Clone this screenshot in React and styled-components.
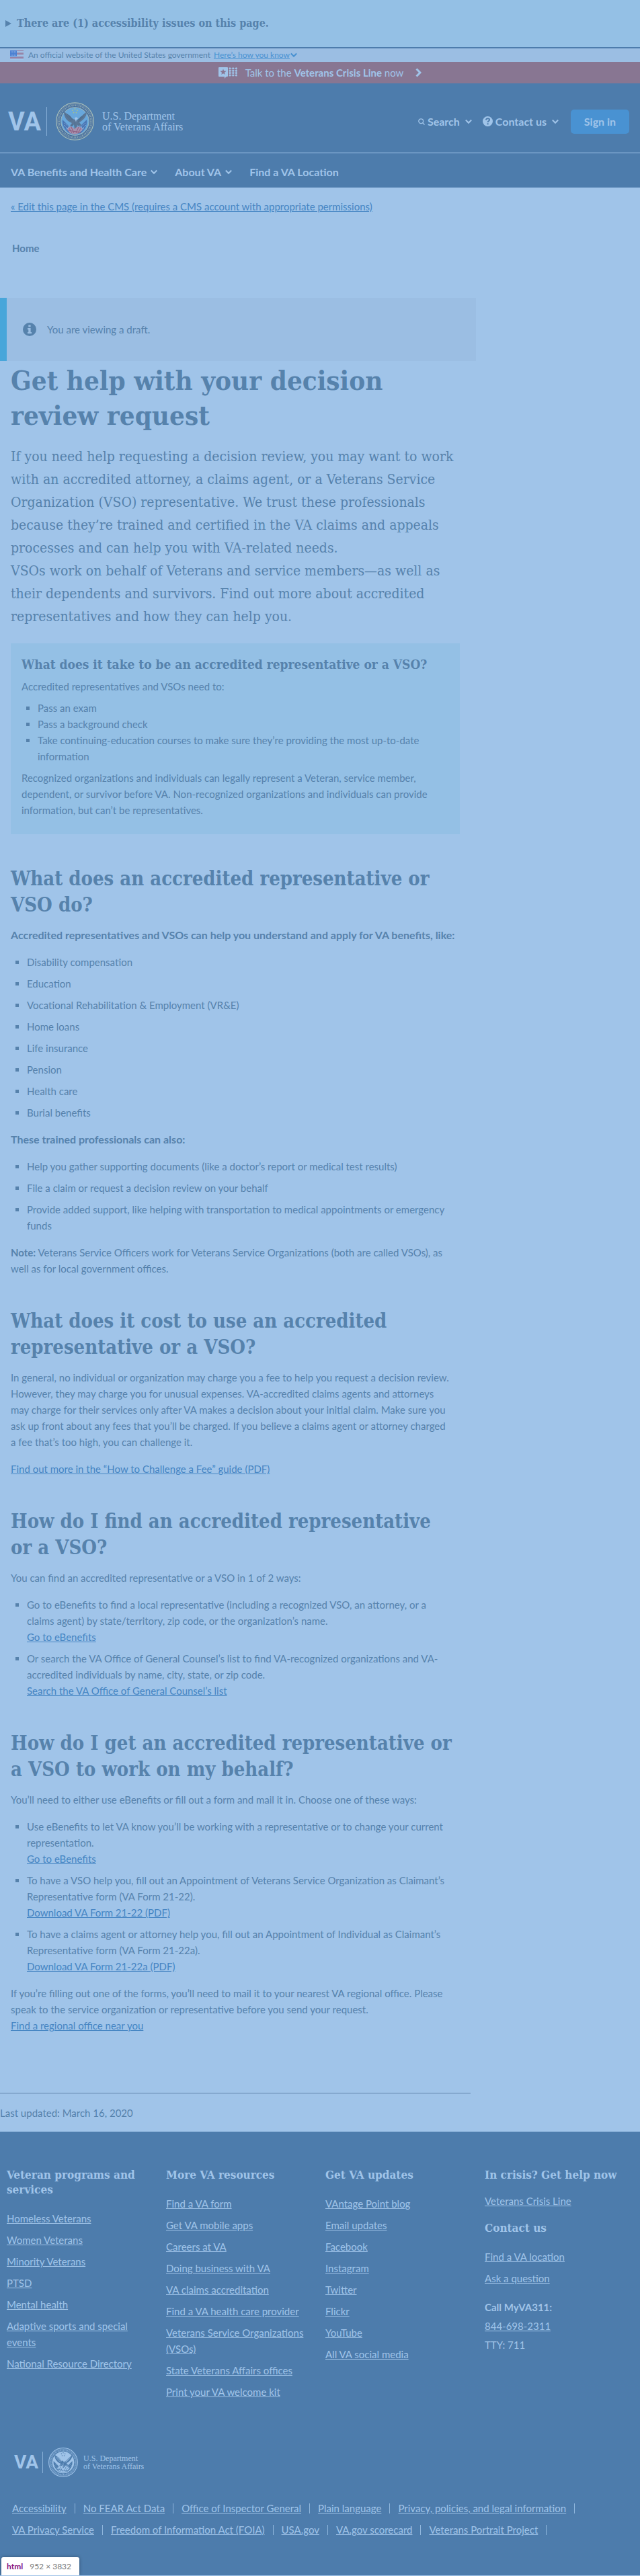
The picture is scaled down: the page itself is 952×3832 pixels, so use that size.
import React from "react";
import styled, { createGlobalStyle } from "styled-components";

const c = {
  page: "#a0c4e9",
  ink: "#5682ac",
  navy: "#4d7cac",
  link: "#4585c3",
  sky: "#94c0e5",
  gray: "#9bbee3",
  crisis: "#887692",
  action: "#4992d2",
  info: "#48a6da",
};

const serif = `"DejaVu Serif Condensed", "DejaVu Serif", serif`;
const sans = `Lato, "Open Sans", sans-serif`;

const GlobalStyle = createGlobalStyle`
  *, *::before, *::after { box-sizing: border-box; }
  body {
    margin: 0;
    background: ${c.page};
    color: ${c.ink};
    font: 15px/24px ${sans};
  }
  h1, h2, h3, p, ul { margin: 0; padding: 0; }
  button { font: inherit; color: inherit; background: none; border: 0; padding: 0; cursor: pointer; }
`;

const Page = styled.div`
  position: relative;
`;

const Issues = styled.details`
  background: ${c.sky};
  border-bottom: 2px solid ${c.navy};
  padding: 24px 8px;
`;

const IssuesTitle = styled.summary`
  font: bold 16px/22px ${serif};
  display: flex;
  align-items: center;
  gap: 8px;
  list-style: none;
`;

const GovBanner = styled.div`
  display: flex;
  align-items: center;
  height: 20px;
  padding: 0 15px;
  background: ${c.gray};
  font-size: 12px;
  line-height: 20px;
`;

const GovText = styled.span`
  margin: 0 5px 0 7px;
`;

const GovToggle = styled.button`
  display: flex;
  align-items: center;
  gap: 1px;
  color: ${c.action};
  span { text-decoration: underline; }
`;

const CrisisBar = styled.a`
  display: flex;
  align-items: center;
  justify-content: center;
  height: 32px;
  background: ${c.crisis};
  color: ${c.page};
  text-decoration: none;
`;

const CrisisText = styled.span`
  margin: 0 18px 0 12px;
`;

const Header = styled.header`
  background: ${c.navy};
  color: ${c.page};
`;

const HeaderTop = styled.div`
  display: flex;
  align-items: center;
  justify-content: space-between;
  height: 104px;
  padding: 10px 16px 0 12px;
  border-bottom: 1px solid ${c.page};
`;

const LogoLink = styled.a`
  display: flex;
  align-items: center;
  color: inherit;
  text-decoration: none;
`;

const LogoLetters = styled.span`
  font: bold ${(p) => (p.$small ? "28px/32px" : "38px/44px")} Roboto, sans-serif;
`;

const LogoRule = styled.span`
  width: 1px;
  height: ${(p) => (p.$small ? 32 : 43)}px;
  margin: ${(p) => (p.$small ? "0 8px 0 6px" : "0 13px 0 8px")};
  background: currentColor;
  opacity: 0.7;
`;

const LogoName = styled.span`
  margin-left: ${(p) => (p.$small ? 8 : 12)}px;
  font: ${(p) => (p.$small ? "12px/12px" : "16px/16px")} "Liberation Serif", serif;
`;

const Tools = styled.div`
  display: flex;
  align-items: center;
`;

const ToolButton = styled.button`
  display: flex;
  align-items: center;
  gap: 4px;
  margin-right: ${(p) => p.$gap}px;
  font-size: 16px;
  font-weight: bold;
`;

const SignIn = styled.button`
  width: 87px;
  height: 36px;
  border-radius: 5px;
  background: ${c.action};
  font-size: 16px;
  font-weight: bold;
`;

const Chevron = styled.svg`
  width: 10px;
  height: 8px;
  margin-left: ${(p) => p.$gap || 0}px;
  fill: none;
  stroke: currentColor;
  stroke-width: 2;
`;

const Nav = styled.nav`
  display: flex;
  gap: 26px;
  height: 51px;
  align-items: center;
  padding: 4px 16px 0;
  font-size: 16px;
  font-weight: bold;
`;

const NavItem = styled.button`
  display: flex;
  align-items: center;
  font-weight: bold;
`;

const NavLink = styled.a`
  color: inherit;
  text-decoration: none;
`;

const Link = styled.a`
  color: ${(p) => (p.$light ? c.page : c.link)};
`;

const CmsRow = styled.div`
  padding: 16px 16px 38px;
`;

const Crumb = styled.nav`
  padding: 0 18px 62px;
  font-weight: bold;
  a { color: inherit; text-decoration: none; }
`;

const Alert = styled.div`
  display: flex;
  align-items: center;
  gap: 16px;
  max-width: 708px;
  height: 94px;
  padding: 0 24px;
  background: ${c.gray};
  border-left: 10px solid ${c.info};
  svg { flex: none; }
`;

const Article = styled.article`
  max-width: 700px;
  padding: 3px 16px 88px;
`;

const Title = styled.h1`
  font: bold 40px/52px ${serif};
`;

const Intro = styled.div`
  margin: 18px 0 23px;
  font: 21px/34px ${serif};
`;

const Feature = styled.section`
  padding: 18px 16px 24px;
  background: ${c.sky};
`;

const FeatureTitle = styled.h3`
  margin-bottom: 8px;
  font: bold 19px/26px ${serif};
`;

const SectionTitle = styled.h2`
  margin: 47px 0 13px;
  font: bold 29px/39px ${serif};
`;

const Text = styled.p`
  & + & { margin-top: 16px; }
`;

const Strong = styled.b`
  font-size: 16px;
`;

const Bullets = styled.ul`
  && { padding-left: 24px; }
  list-style: square;
  margin: ${(p) => (p.$tight ? 8 : 16)}px 0;
  li + li { margin-top: ${(p) => (p.$tight ? 0 : 8)}px; }
`;

const Updated = styled.p`
  max-width: 700px;
  border-top: 2px solid #85a9cf;
  && { padding: 16px 0; }
`;

const Footer = styled.footer`
  background: ${c.navy};
  color: ${c.page};
  padding: 53px 10px 56px;
`;

const FooterColumns = styled.div`
  display: grid;
  grid-template-columns: repeat(4, minmax(0, 1fr));
  gap: 26px;
  margin-right: 10px;
`;

const FooterTitle = styled.h2`
  margin-bottom: ${(p) => p.$gap || 20}px;
  font: bold 17px/22px ${serif};
`;

const FooterList = styled.ul`
  list-style: none;
  && { margin-bottom: ${(p) => p.$gap || 0}px; }
  li + li { margin-top: 8px; }
`;

const FooterText = styled.p`
  && { margin-bottom: ${(p) => p.$gap || 0}px; }
`;

const FooterLogo = styled.div`
  display: flex;
  padding: 71px 0 34px 11px;
`;

const LegalLinks = styled.ul`
  display: flex;
  flex-wrap: wrap;
  gap: 8px 12px;
  max-width: 880px;
  list-style: none;
  && { padding-left: 8px; }
  li { display: flex; align-items: center; gap: 12px; }
  li::after { content: ""; width: 1px; height: 15px; background: currentColor; opacity: 0.8; }
`;

const SizeTip = styled.div`
  position: absolute;
  left: 2px;
  bottom: 0;
  width: 116px;
  height: 27px;
  padding-left: 8px;
  border-radius: 3px 3px 0 0;
  background: #fff;
  box-shadow: 0 0 5px rgba(0, 0, 0, 0.35);
  color: #777;
  font-size: 12px;
  line-height: 27px;
  b { margin-right: 10px; color: #881280; }
`;

function Down({ gap }) {
  return (
    <Chevron viewBox="0 0 10 8" $gap={gap} aria-hidden="true">
      <path d="M.8 1.500 5 5.800 9.200 1.500" />
    </Chevron>
  );
}

function Flag() {
  return (
    <svg width="20" height="14" viewBox="0 0 20 14" aria-hidden="true">
      <rect width="20" height="14" fill="#a0c4e9" />
      {[0, 2, 4, 6, 8, 10, 12].map((y) => (
        <rect key={y} y={y} width="20" height="1" fill="#9680a2" />
      ))}
      <rect width="10" height="9" fill="#4a80d2" />
      {[1, 3, 5, 7].map((y) => (
        <path key={y} d={`M1 ${y + 0.5}h8`} stroke="#86aae2" strokeDasharray="1 1.4" />
      ))}
    </svg>
  );
}

function CrisisIcon() {
  const dots = [];
  for (let y = 0; y < 4; y++) for (let x = 0; x < 3; x++) dots.push([17 + x * 4.7, 1.8 + y * 3.4]);
  return (
    <svg width="28" height="17" viewBox="0 0 28 17" fill={c.page} aria-hidden="true">
      <path d="M1 0h12q1 0 1 1v12q0 1-1 1h-1.500l-2.500 3v-3H1q-1 0-1-1V1q0-1 1-1z" />
      <path d="m7 2.500 1.200 3.100 3.300.2-2.600 2.100.9 3.200L7 9.300l-2.800 1.800.9-3.200-2.600-2.100 3.300-.2z" fill={c.crisis} />
      {dots.map(([x, y]) => (
        <circle key={`${x}-${y}`} cx={x} cy={y} r="1.500" />
      ))}
      <path d="M17 1.800h9.400M17 5.200h9.400M17 8.600h9.400M17 12h9.400M17 1.800V12M21.700 1.800V12M26.400 1.800V12" stroke={c.page} strokeWidth=".5" />
    </svg>
  );
}

function Seal({ mono }) {
  const size = mono ? 44 : 57;
  const ring = mono ? c.page : "#a3bbb9";
  const band = mono ? c.navy : "#456d9f";
  const field = mono ? c.page : "#68a7dc";
  const bird = mono ? c.navy : "#5b7797";
  const wing = mono ? c.page : "#48698c";
  return (
    <svg width={size} height={size} viewBox="0 0 57 57" fill="none" role="img" aria-label="Department of Veterans Affairs seal">
      <circle cx="28.500" cy="28.500" r="27.700" fill={band} stroke={ring} strokeWidth="1.300" />
      <circle cx="28.500" cy="28.500" r="25.900" stroke={ring} strokeWidth=".5" />
      <circle cx="28.500" cy="28.500" r="23.700" stroke={ring} strokeWidth="2.600" strokeDasharray="1 .9 .5 .8 1.300 .9" opacity=".75" />
      <circle cx="28.500" cy="28.500" r="20.800" fill={field} stroke={ring} strokeWidth="1" />
      {[[28.5, 10], [25, 12], [32, 12], [26.5, 15.5], [30.5, 15.5]].map(([x, y]) => (
        <circle key={`${x}-${y}`} cx={x} cy={y} r="1" fill={mono ? c.navy : "#a2bf8f"} />
      ))}
      <path d="M10 26c-1 8 3 15 10 20l8 2.500 9-2.500c7-5 10-12 9-20l-9 9-8 5-9-4z" fill={mono ? c.navy : "#4a76b4"} />
      <path d="M13 31l7 6M12 34l7 7M44 31l-7 6M45 34l-7 7M15 39l5 5M42 39l-5 5" stroke={c.page} strokeDasharray="1 1.300" />
      <path d="M12 14c0 8 4 14 12 17l-3 4c3 2 5 0 6-2l1 7h3l1-6c2 2 4 2 6 0l-3-4c7-4 11-9 11-16l-8 7-6 6-3-1-4-1-4-5z" fill={bird} />
      <path d="M14 18l9 10M17 18l8 9M20 20l6 6M43 17l-9 10M41 21l-8 8M38 21l-6 6M25 33l-3 4M34 33l3 3M28.500 30v8" stroke={wing} strokeWidth=".8" />
      <path d="M28 24c1-2 4-2 5 .5l-2 1-1 4z" fill={c.page} />
      <path d="M17 40c4-5 7-5 11 0 4-5 8-5 12 0l-5 6-7 2-7-2z" fill={mono ? c.page : "#a792ae"} />
      <path d="M20 39l4 7M23 37l4 9M37 39l-4 7M34 37l-4 9M18 42l20 3" stroke={mono ? c.navy : "#8d5c80"} strokeWidth="1" />
      <path d="M22 35c-2 2-4 2-5 5M35 35c3 1 4 3 5 5" stroke={c.page} strokeWidth=".8" />
    </svg>
  );
}

function Logo({ small }) {
  return (
    <LogoLink href="#home">
      <LogoLetters $small={small}>VA</LogoLetters>
      <LogoRule $small={small} />
      <Seal mono={small} />
      <LogoName $small={small}>
        U.S. Department
        <br />
        of Veterans Affairs
      </LogoName>
    </LogoLink>
  );
}

const programs = ["Homeless Veterans", "Women Veterans", "Minority Veterans", "PTSD", "Mental health", "Adaptive sports and special events", "National Resource Directory"];
const resources = ["Find a VA form", "Get VA mobile apps", "Careers at VA", "Doing business with VA", "VA claims accreditation", "Find a VA health care provider", "Veterans Service Organizations (VSOs)", "State Veterans Affairs offices", "Print your VA welcome kit"];
const updates = ["VAntage Point blog", "Email updates", "Facebook", "Instagram", "Twitter", "Flickr", "YouTube", "All VA social media"];
const legal = ["Accessibility", "No FEAR Act Data", "Office of Inspector General", "Plain language", "Privacy, policies, and legal information", "VA Privacy Service", "Freedom of Information Act (FOIA)", "USA.gov", "VA.gov scorecard", "Veterans Portrait Project"];
const benefits = ["Disability compensation", "Education", "Vocational Rehabilitation & Employment (VR&E)", "Home loans", "Life insurance", "Pension", "Health care", "Burial benefits"];

function LinkItems({ items }) {
  return items.map((t) => (
    <li key={t}>
      <Link $light href="#link">{t}</Link>
    </li>
  ));
}

export default function App() {
  return (
    <Page>
      <GlobalStyle />
      <Issues>
        <IssuesTitle>
          <svg width="9" height="10" viewBox="0 0 9 10" fill="currentColor" aria-hidden="true">
            <path d="M0 0l9 5-9 5z" />
          </svg>
          There are (1) accessibility issues on this page.
        </IssuesTitle>
      </Issues>
      <GovBanner>
        <Flag />
        <GovText>An official website of the United States government</GovText>
        <GovToggle>
          <span>Here’s how you know</span>
          <Down />
        </GovToggle>
      </GovBanner>
      <CrisisBar href="#crisis">
        <CrisisIcon />
        <CrisisText>
          Talk to the <b>Veterans Crisis Line</b> now
        </CrisisText>
        <svg width="9" height="14" viewBox="0 0 9 14" fill="none" stroke="currentColor" strokeWidth="3" aria-hidden="true">
          <path d="M1.500 1.500 7 7l-5.500 5.500" />
        </svg>
      </CrisisBar>
      <Header>
        <HeaderTop>
          <Logo />
          <Tools>
            <ToolButton $gap={16}>
              <svg width="10" height="10" viewBox="0 0 10 10" fill="none" stroke="currentColor" strokeWidth="1.300" aria-hidden="true">
                <circle cx="4.200" cy="4.200" r="3.400" />
                <path d="m6.700 6.700 2.800 2.800" />
              </svg>
              Search
              <Down gap={4} />
            </ToolButton>
            <ToolButton $gap={18}>
              <svg width="15" height="15" viewBox="0 0 15 15" aria-hidden="true">
                <circle cx="7.500" cy="7.500" r="7.500" fill={c.page} />
                <path d="M4.800 5.400C5.300 3.600 6.400 3.200 7.600 3.200c1.500 0 2.500.9 2.500 2.100 0 1.700-2.500 1.800-2.500 3.600" fill="none" stroke={c.navy} strokeWidth="2" />
                <rect x="6.500" y="10.300" width="2.100" height="2" fill={c.navy} />
              </svg>
              Contact us
              <Down gap={4} />
            </ToolButton>
            <SignIn>Sign in</SignIn>
          </Tools>
        </HeaderTop>
        <Nav>
          <NavItem>VA Benefits and Health Care<Down gap={6} /></NavItem>
          <NavItem>About VA<Down gap={6} /></NavItem>
          <NavLink href="#locations">Find a VA Location</NavLink>
        </Nav>
      </Header>
      <main>
        <CmsRow>
          <Link href="#edit">« Edit this page in the CMS (requires a CMS account with appropriate permissions)</Link>
        </CmsRow>
        <Crumb><a href="#home">Home</a></Crumb>
        <Alert>
          <svg width="20" height="20" viewBox="0 0 20 20" aria-hidden="true">
            <circle cx="10" cy="10" r="10" fill={c.ink} />
            <path d="M8.300 3.500h3.300v2.800H8.300zM7 8h4.600v6H13v2.300H7V14h1.300v-3.700H7z" fill={c.gray} />
          </svg>
          <p>You are viewing a draft.</p>
        </Alert>
        <Article>
          <Title>Get help with your decision review request</Title>
          <Intro>
            <p>If you need help requesting a decision review, you may want to work with an accredited attorney, a claims agent, or a Veterans Service Organization (VSO) representative. We trust these professionals because they’re trained and certified in the VA claims and appeals processes and can help you with VA-related needs.</p>
            <p>VSOs work on behalf of Veterans and service members—as well as their dependents and survivors. Find out more about accredited representatives and how they can help you.</p>
          </Intro>
          <Feature>
            <FeatureTitle>What does it take to be an accredited representative or a VSO?</FeatureTitle>
            <Text>Accredited representatives and VSOs need to:</Text>
            <Bullets $tight>
              <li>Pass an exam</li>
              <li>Pass a background check</li>
              <li>Take continuing-education courses to make sure they’re providing the most up-to-date information</li>
            </Bullets>
            <Text>Recognized organizations and individuals can legally represent a Veteran, service member, dependent, or survivor before VA. Non-recognized organizations and individuals can provide information, but can’t be representatives.</Text>
          </Feature>

          <SectionTitle>What does an accredited representative or VSO do?</SectionTitle>
          <Text><Strong>Accredited representatives and VSOs can help you understand and apply for VA benefits, like:</Strong></Text>
          <Bullets>
            {benefits.map((b) => <li key={b}>{b}</li>)}
          </Bullets>
          <Text><Strong>These trained professionals can also:</Strong></Text>
          <Bullets>
            <li>Help you gather supporting documents (like a doctor’s report or medical test results)</li>
            <li>File a claim or request a decision review on your behalf</li>
            <li>Provide added support, like helping with transportation to medical appointments or emergency funds</li>
          </Bullets>
          <Text><b>Note:</b> Veterans Service Officers work for Veterans Service Organizations (both are called VSOs), as<br />well as for local government offices.</Text>

          <SectionTitle>What does it cost to use an accredited representative or a VSO?</SectionTitle>
          <Text>In general, no individual or organization may charge you a fee to help you request a decision review. However, they may charge you for unusual expenses. VA-accredited claims agents and attorneys<br />may charge for their services only after VA makes a decision about your initial claim. Make sure you<br />ask up front about any fees that you’ll be charged. If you believe a claims agent or attorney charged<br />a fee that’s too high, you can challenge it.</Text>
          <Text><Link href="#guide">Find out more in the “How to Challenge a Fee” guide (PDF)</Link></Text>

          <SectionTitle>How do I find an accredited representative<br />or a VSO?</SectionTitle>
          <Text>You can find an accredited representative or a VSO in 1 of 2 ways:</Text>
          <Bullets>
            <li>Go to eBenefits to find a local representative (including a recognized VSO, an attorney, or a<br />claims agent) by state/territory, zip code, or the organization’s name.<br /><Link href="#ebenefits">Go to eBenefits</Link></li>
            <li>Or search the VA Office of General Counsel’s list to find VA-recognized organizations and VA-accredited individuals by name, city, state, or zip code.<br /><Link href="#counsel">Search the VA Office of General Counsel’s list</Link></li>
          </Bullets>

          <SectionTitle>How do I get an accredited representative or a VSO to work on my behalf?</SectionTitle>
          <Text>You’ll need to either use eBenefits or fill out a form and mail it in. Choose one of these ways:</Text>
          <Bullets>
            <li>Use eBenefits to let VA know you’ll be working with a representative or to change your current representation.<br /><Link href="#ebenefits">Go to eBenefits</Link></li>
            <li>To have a VSO help you, fill out an Appointment of Veterans Service Organization as Claimant’s Representative form (VA Form 21-22).<br /><Link href="#form-21-22">Download VA Form 21-22 (PDF)</Link></li>
            <li>To have a claims agent or attorney help you, fill out an Appointment of Individual as Claimant’s Representative form (VA Form 21-22a).<br /><Link href="#form-21-22a">Download VA Form 21-22a (PDF)</Link></li>
          </Bullets>
          <Text>If you’re filling out one of the forms, you’ll need to mail it to your nearest VA regional office. Please speak to the service organization or representative before you send your request.<br /><Link href="#office">Find a regional office near you</Link></Text>
        </Article>
        <Updated>Last updated: March 16, 2020</Updated>
      </main>
      <Footer>
        <FooterColumns>
          <div>
            <FooterTitle>Veteran programs and services</FooterTitle>
            <FooterList><LinkItems items={programs} /></FooterList>
          </div>
          <div>
            <FooterTitle>More VA resources</FooterTitle>
            <FooterList><LinkItems items={resources} /></FooterList>
          </div>
          <div>
            <FooterTitle>Get VA updates</FooterTitle>
            <FooterList><LinkItems items={updates} /></FooterList>
          </div>
          <div>
            <FooterTitle $gap={16}>In crisis? Get help now</FooterTitle>
            <FooterText $gap={17}><Link $light href="#crisis">Veterans Crisis Line</Link></FooterText>
            <FooterTitle>Contact us</FooterTitle>
            <FooterList $gap={19}><LinkItems items={["Find a VA location", "Ask a question"]} /></FooterList>
            <FooterText $gap={4}><b>Call MyVA311:</b></FooterText>
            <FooterText $gap={4}><Link $light href="tel:8446982311">844-698-2311</Link></FooterText>
            <FooterText>TTY: 711</FooterText>
          </div>
        </FooterColumns>
        <FooterLogo><Logo small /></FooterLogo>
        <LegalLinks><LinkItems items={legal} /></LegalLinks>
      </Footer>
      <SizeTip><b>html</b>952 × 3832</SizeTip>
    </Page>
  );
}
